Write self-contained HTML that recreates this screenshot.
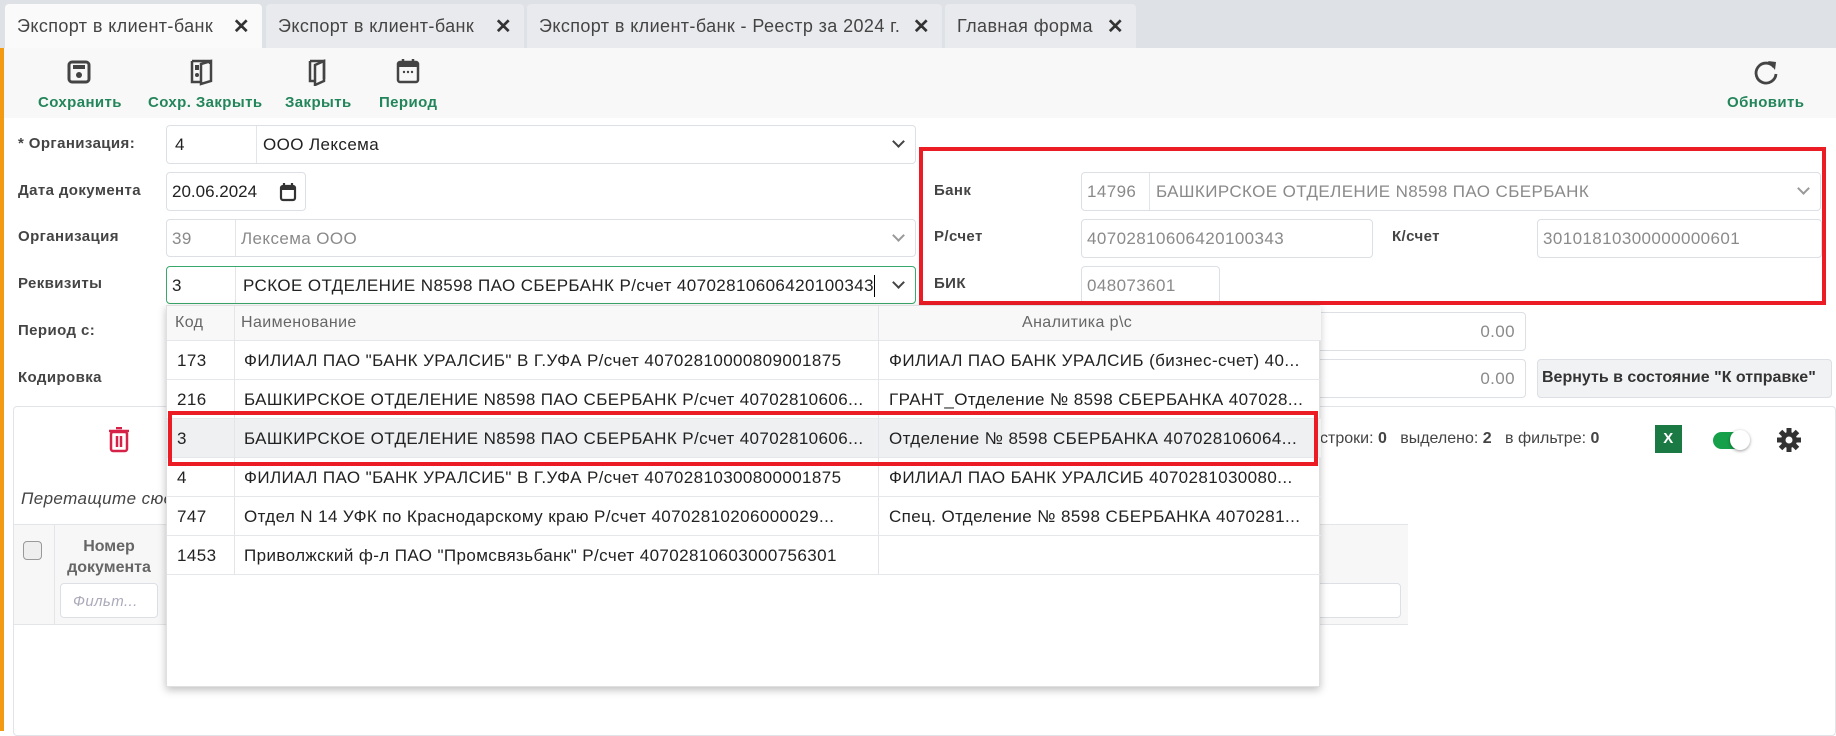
<!DOCTYPE html>
<html><head><meta charset="utf-8"><style>
*{box-sizing:border-box;margin:0;padding:0}
body{width:1836px;height:731px;overflow:hidden;background:#fff;font-family:"Liberation Sans",sans-serif;color:#333;position:relative;letter-spacing:.4px}
.a{position:absolute}
.tab{position:absolute;top:4px;height:44px;background:#e9eaed;border-radius:4px 4px 0 0;font-size:18px;color:#444;padding:12px 0 0 12px;white-space:nowrap}
.tab .x{position:absolute;right:12px;top:10px;font-size:20px;font-weight:bold;color:#333}
.lbl{position:absolute;font-size:15px;font-weight:bold;color:#444}
.inp{position:absolute;border:1px solid #dcdfe3;border-radius:4px;background:#fff;font-size:17px;color:#222;white-space:nowrap;overflow:hidden}
.inp span{position:absolute;top:9px}
.dis{color:#8a8a8a}
.sep{position:absolute;top:0;bottom:0;width:1px;background:#e3e5e8}
.chev{position:absolute;right:12px;top:11px;width:9px;height:9px;border-right:2px solid #444;border-bottom:2px solid #444;transform:rotate(45deg)}
.tb{position:absolute;top:94px;font-size:15px;font-weight:bold;color:#23855a;white-space:nowrap}
.dd{position:absolute;left:166px;top:305px;width:1154px;height:382px;background:#fff;box-shadow:0 3px 8px rgba(0,0,0,.25);border:1px solid #e0e0e0}
.row{position:absolute;left:0;width:1154px;height:39px;border-bottom:1px solid #e6e7ea;font-size:17px;color:#222;white-space:nowrap}
.row span{position:absolute;top:10px}
</style></head><body>
<div class="a" style="left:0;top:0;width:1836px;height:48px;background:#dee1e5"></div>
<div class="tab" style="left:5px;width:257px;background:#fafafa">Экспорт в клиент-банк<span class="x">✕</span></div>
<div class="tab" style="left:266px;width:258px">Экспорт в клиент-банк<span class="x">✕</span></div>
<div class="tab" style="left:527px;width:415px">Экспорт в клиент-банк - Реестр за 2024 г.<span class="x">✕</span></div>
<div class="tab" style="left:945px;width:191px">Главная форма<span class="x">✕</span></div>
<div class="a" style="left:0;top:48px;width:1836px;height:70px;background:#f8f8f8"></div>
<div class="a" style="left:0;top:48px;width:4px;height:683px;background:#f29a12"></div>
<svg class="a" style="left:66px;top:59px" width="26" height="26" viewBox="0 0 26 26"><rect x="3" y="3" width="20" height="20" rx="3" fill="none" stroke="#444" stroke-width="3"/><rect x="7" y="6" width="12" height="4" fill="#444"/><circle cx="13" cy="16" r="3" fill="#444"/></svg>
<svg class="a" style="left:189px;top:58px" width="28" height="28" viewBox="0 0 28 28"><path d="M3 3h18v3M3 3v21h8" fill="none" stroke="#444" stroke-width="2.5"/><path d="M12 6l10-3v20l-10 3z" fill="none" stroke="#444" stroke-width="2.5"/><rect x="6" y="7" width="4" height="5" fill="#444"/><circle cx="8" cy="17" r="2" fill="#444"/></svg>
<svg class="a" style="left:307px;top:58px" width="22" height="28" viewBox="0 0 22 28"><path d="M3 3h14v18M3 3v20h5" fill="none" stroke="#444" stroke-width="2.5"/><path d="M8 7l9-4v20l-9 4z" fill="none" stroke="#444" stroke-width="2.5"/></svg>
<svg class="a" style="left:395px;top:57px" width="26" height="28" viewBox="0 0 26 28"><rect x="3" y="5" width="20" height="20" rx="2" fill="none" stroke="#444" stroke-width="2.5"/><rect x="3" y="5" width="20" height="5" fill="#444"/><path d="M8 2v5M18 2v5" stroke="#444" stroke-width="2.5"/><circle cx="9" cy="15" r="1.2" fill="#444"/><circle cx="13" cy="15" r="1.2" fill="#444"/><circle cx="17" cy="15" r="1.2" fill="#444"/></svg>
<div class="tb" style="left:38px">Сохранить</div>
<div class="tb" style="left:148px">Сохр. Закрыть</div>
<div class="tb" style="left:285px">Закрыть</div>
<div class="tb" style="left:379px">Период</div>
<svg class="a" style="left:1752px;top:58px" width="28" height="28" viewBox="0 0 28 28"><path d="M22 9A10 10 0 1 0 24 16" fill="none" stroke="#444" stroke-width="2.8"/><path d="M16 3l8 1-1 8z" fill="#444"/></svg>
<div class="tb" style="left:1727px">Обновить</div>
<div class="lbl" style="left:18px;top:135px">* Организация:</div>
<div class="inp" style="left:166px;top:125px;width:750px;height:39px"><span style="left:8px">4</span><div class="sep" style="left:89px"></div><span style="left:96px">ООО Лексема</span><div class="chev"></div></div>
<div class="lbl" style="left:18px;top:182px">Дата документа</div>
<div class="inp" style="left:166px;top:172px;width:140px;height:39px"><span style="left:5px;letter-spacing:0">20.06.2024</span>
<svg class="a" style="left:112px;top:9px" width="18" height="20" viewBox="0 0 18 20"><rect x="2" y="4" width="14" height="14" rx="2" fill="none" stroke="#333" stroke-width="2.2"/><rect x="2" y="4" width="14" height="4" fill="#333"/><path d="M5 1v4M13 1v4" stroke="#333" stroke-width="2.2"/></svg></div>
<div class="lbl" style="left:18px;top:228px">Организация</div>
<div class="inp dis" style="left:166px;top:219px;width:750px;height:38px"><span style="left:5px">39</span><div class="sep" style="left:68px"></div><span style="left:74px">Лексема ООО</span><div class="chev" style="border-color:#999"></div></div>
<div class="lbl" style="left:18px;top:275px">Реквизиты</div>
<div class="inp" style="left:166px;top:266px;width:750px;height:38px;border-color:#3aa86a"><span style="left:5px">3</span><div class="sep" style="left:68px"></div><span style="left:76px">РСКОЕ ОТДЕЛЕНИЕ N8598 ПАО СБЕРБАНК Р/счет 40702810606420100343</span><div class="a" style="left:707px;top:8px;width:1px;height:22px;background:#000"></div><div class="chev"></div></div>
<div class="lbl" style="left:18px;top:322px">Период с:</div>
<div class="lbl" style="left:18px;top:369px">Кодировка</div>
<div class="inp dis" style="left:1311px;top:312px;width:215px;height:39px"><span style="right:10px">0.00</span></div>
<div class="inp dis" style="left:1311px;top:359px;width:215px;height:39px"><span style="right:10px">0.00</span></div>
<div class="a" style="left:1537px;top:359px;width:295px;height:39px;background:#f1f2f4;border:1px solid #dcdfe3;border-radius:4px;font-size:16px;font-weight:bold;color:#333;padding:9px 0 0 4px;white-space:nowrap;letter-spacing:0">Вернуть в состояние "К отправке"</div>
<div class="lbl" style="left:934px;top:182px">Банк</div>
<div class="inp dis" style="left:1081px;top:172px;width:740px;height:39px"><span style="left:5px">14796</span><div class="sep" style="left:67px"></div><span style="left:74px">БАШКИРСКОЕ ОТДЕЛЕНИЕ N8598 ПАО СБЕРБАНК</span><div class="chev" style="border-color:#999"></div></div>
<div class="lbl" style="left:934px;top:228px">Р/счет</div>
<div class="inp dis" style="left:1081px;top:219px;width:292px;height:39px"><span style="left:5px">40702810606420100343</span></div>
<div class="lbl" style="left:1392px;top:228px">К/счет</div>
<div class="inp dis" style="left:1537px;top:219px;width:285px;height:39px"><span style="left:5px">30101810300000000601</span></div>
<div class="lbl" style="left:934px;top:275px">БИК</div>
<div class="inp dis" style="left:1081px;top:266px;width:139px;height:39px"><span style="left:5px">048073601</span></div>
<div class="a" style="left:919px;top:147px;width:907px;height:158px;border:4px solid #ec1c24"></div>
<div class="a" style="left:13px;top:406px;width:1823px;height:330px;border:1px solid #e1e3e8;border-radius:4px"></div>
<svg class="a" style="left:107px;top:427px" width="24" height="26" viewBox="0 0 24 26"><path d="M2 4h20" stroke="#d62149" stroke-width="2.5"/><path d="M9 1h6" stroke="#d62149" stroke-width="2.5"/><rect x="4" y="5" width="16" height="19" rx="2" fill="none" stroke="#d62149" stroke-width="2.5"/><path d="M10 9v11M14 9v11" stroke="#d62149" stroke-width="2.5"/></svg>
<div class="a" style="left:21px;top:489px;font-size:17px;font-style:italic;color:#444">Перетащите сюда</div>
<div class="a" style="left:14px;top:524px;width:1394px;height:101px;background:#f7f7f8;border-top:1px solid #e3e5e8;border-bottom:1px solid #e3e5e8"></div>
<div class="a" style="left:54px;top:524px;width:1px;height:101px;background:#e3e5e8"></div>
<div class="a" style="left:23px;top:541px;width:19px;height:19px;border:1px solid #999;border-radius:4px;background:#eee"></div>
<div class="a" style="left:56px;top:536px;width:106px;text-align:center;font-size:16px;font-weight:bold;color:#666;line-height:21px;letter-spacing:0">Номер<br>документа</div>
<div class="a" style="left:60px;top:583px;width:98px;height:35px;border:1px solid #dcdfe3;border-radius:4px;background:#fff;font-size:15px;font-style:italic;color:#aab;padding:9px 0 0 12px">Фильт...</div>
<div class="a" style="left:1100px;top:583px;width:301px;height:35px;border:1px solid #dcdfe3;border-radius:4px;background:#fff"></div>
<div class="a" style="left:1320px;top:430px;font-size:16px;color:#444;white-space:nowrap;letter-spacing:0">строки: <b>0</b>&nbsp;&nbsp; выделено: <b>2</b>&nbsp;&nbsp; в фильтре: <b>0</b></div>
<div class="a" style="left:1655px;top:425px;width:27px;height:28px;background:#1b7a43;color:#fff;font-weight:bold;font-size:15px;text-align:center;padding-top:5px">X</div>
<div class="a" style="left:1713px;top:432px;width:34px;height:17px;background:#16a04a;border-radius:9px"></div>
<div class="a" style="left:1730px;top:430px;width:20px;height:20px;background:#fff;border-radius:50%;box-shadow:0 1px 3px rgba(0,0,0,.4)"></div>
<svg class="a" style="left:1776px;top:427px" width="26" height="26" viewBox="0 0 26 26"><g fill="#333"><circle cx="13" cy="13" r="8"/><g id="t"><rect x="10.5" y="1" width="5" height="6"/><rect x="10.5" y="19" width="5" height="6"/></g><use href="#t" transform="rotate(45 13 13)"/><use href="#t" transform="rotate(90 13 13)"/><use href="#t" transform="rotate(135 13 13)"/></g><circle cx="13" cy="13" r="3.5" fill="#fff"/></svg>
<div class="dd">
<div class="row" style="top:0;height:35px;background:#f8f8f8;color:#666;font-size:16px"><span style="left:8px;top:8px">Код</span><span style="left:74px;top:8px">Наименование</span><span style="left:855px;top:8px">Аналитика р\с</span></div>
<div class="row" style="top:35px"><span style="left:10px">173</span><span style="left:77px">ФИЛИАЛ ПАО "БАНК УРАЛСИБ" В Г.УФА Р/счет 40702810000809001875</span><span style="left:722px">ФИЛИАЛ ПАО БАНК УРАЛСИБ (бизнес-счет) 40...</span></div>
<div class="row" style="top:74px"><span style="left:10px">216</span><span style="left:77px">БАШКИРСКОЕ ОТДЕЛЕНИЕ N8598 ПАО СБЕРБАНК Р/счет 40702810606...</span><span style="left:722px">ГРАНТ_Отделение № 8598 СБЕРБАНКА 407028...</span></div>
<div class="row" style="top:113px;background:#eff0f2"><span style="left:10px">3</span><span style="left:77px">БАШКИРСКОЕ ОТДЕЛЕНИЕ N8598 ПАО СБЕРБАНК Р/счет 40702810606...</span><span style="left:722px">Отделение № 8598 СБЕРБАНКА 407028106064...</span></div>
<div class="row" style="top:152px"><span style="left:10px">4</span><span style="left:77px">ФИЛИАЛ ПАО "БАНК УРАЛСИБ" В Г.УФА Р/счет 40702810300800001875</span><span style="left:722px">ФИЛИАЛ ПАО БАНК УРАЛСИБ 4070281030080...</span></div>
<div class="row" style="top:191px"><span style="left:10px">747</span><span style="left:77px">Отдел N 14 УФК по Краснодарскому краю Р/счет 40702810206000029...</span><span style="left:722px">Спец. Отделение № 8598 СБЕРБАНКА 4070281...</span></div>
<div class="row" style="top:230px"><span style="left:10px">1453</span><span style="left:77px">Приволжский ф-л ПАО "Промсвязьбанк" Р/счет 40702810603000756301</span></div>
<div class="a" style="left:67px;top:0;width:1px;height:268px;background:#e3e5e8"></div>
<div class="a" style="left:711px;top:0;width:1px;height:268px;background:#e3e5e8"></div>
<div class="a" style="left:1px;top:105px;width:1150px;height:55px;border:4px solid #ec1c24"></div>
</div>
</body></html>
